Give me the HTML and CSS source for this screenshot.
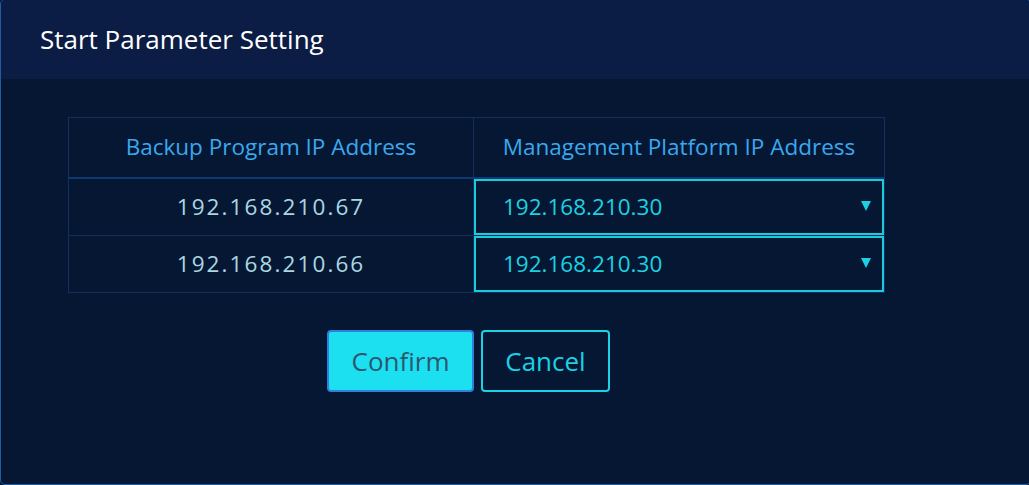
FILE: index.html
```html
<!DOCTYPE html>
<html>
<head>
<meta charset="utf-8">
<link rel="stylesheet" href="styles.css">
</head>
<body>
<div class="dialog">
  <div class="dialog-header">Start Parameter Setting</div>
  <div class="dialog-body">
    <table class="ip-table">
      <thead>
        <tr>
          <th class="col-backup">Backup Program IP Address</th>
          <th class="col-mgmt">Management Platform IP Address</th>
        </tr>
      </thead>
      <tbody>
        <tr>
          <td class="ip-cell">192.168.210.67</td>
          <td class="select-cell"><div class="select"><span>192.168.210.30</span><span class="arrow"></span></div></td>
        </tr>
        <tr>
          <td class="ip-cell">192.168.210.66</td>
          <td class="select-cell"><div class="select"><span>192.168.210.30</span><span class="arrow"></span></div></td>
        </tr>
      </tbody>
    </table>
    <div class="actions">
      <button class="btn btn-confirm">Confirm</button>
      <button class="btn btn-cancel">Cancel</button>
    </div>
  </div>
</div>
</body>
</html>
```
FILE: styles.css
```css
html, body {
  margin: 0;
  padding: 0;
  background: #061733;
  overflow: hidden;
}
body {
  width: 1029px;
  height: 485px;
  font-family: "Open Sans", "Noto Sans", sans-serif;
}
.dialog {
  box-sizing: border-box;
  width: 1031px;
  height: 486px;
  margin-top: -1px;
  border: 1px solid #1f5d9e;
  border-radius: 5px;
  background: #061733;
  overflow: hidden;
  display: flex;
  flex-direction: column;
}
.dialog-header {
  height: 79px;
  box-sizing: border-box;
  background: #0b1c45;
  color: #ffffff;
  font-size: 26px;
  padding: 22px 0 0 39px;
  line-height: 34px;
}
.dialog-body {
  flex: 1;
  padding: 38px 0 0 67px;
}
.ip-table {
  border-collapse: collapse;
  width: 817px;
  table-layout: fixed;
}
.ip-table th, .ip-table td {
  border: 1px solid #12305c;
  padding: 0;
  text-align: center;
}
.col-backup { width: 405px; }
.ip-table th {
  height: 60px;
  color: #3aa8ee;
  font-weight: normal;
  font-size: 22.5px;
  padding-bottom: 2px;
  box-sizing: border-box;
  border-bottom: 2px solid #0d3a72;
}
.ip-cell {
  height: 56px;
  color: #aad7e2;
  font-size: 22.5px;
  letter-spacing: 2.1px;
  padding-bottom: 1px !important;
  box-sizing: border-box;
}
.select-cell {
  height: 56px;
}
.select {
  box-sizing: border-box;
  height: 56px;
  border: 2px solid #19ccdc;
  display: flex;
  align-items: center;
  justify-content: space-between;
  padding: 0 11px 1px 27px;
  color: #1ad2e2;
  font-size: 22.5px;
}
.arrow {
  width: 0;
  height: 0;
  border-left: 5px solid transparent;
  border-right: 5px solid transparent;
  border-top: 10px solid #1ad2e2;
  margin-top: 0;
}
.actions {
  display: flex;
  justify-content: flex-start;
  gap: 7px;
  padding: 37px 0 0 259px;
}
.btn {
  box-sizing: border-box;
  height: 62px;
  border-radius: 4px;
  font-family: "Open Sans", "Noto Sans", sans-serif;
  font-size: 26px;
  padding: 0;
  cursor: pointer;
}
.btn-confirm {
  width: 147px;
  background: #1ce0f0;
  border: 2px solid #2f80dc;
  color: #2d5670;
}
.btn-cancel {
  width: 129px;
  background: transparent;
  border: 2px solid #1ad2e2;
  color: #1ad2e2;
}
```
